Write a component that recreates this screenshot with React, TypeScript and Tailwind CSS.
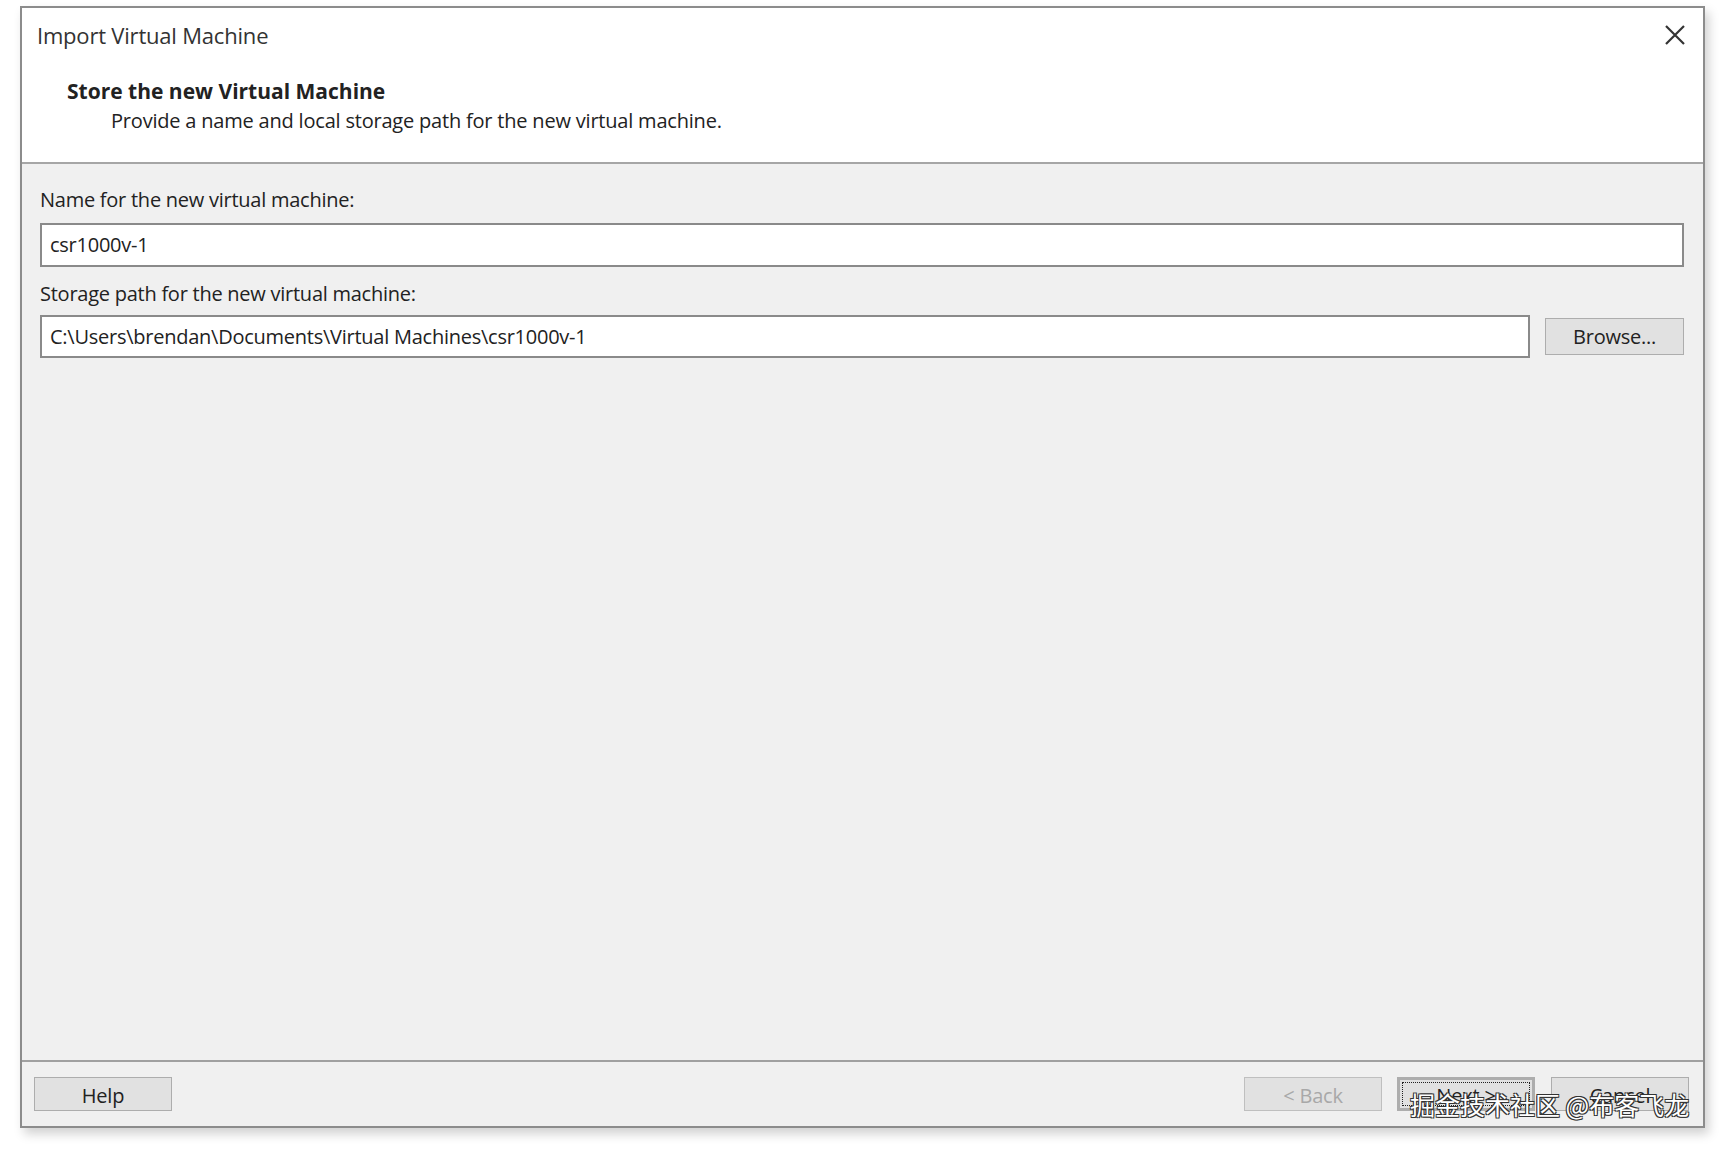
import React from "react";

const font = { fontFamily: '"Open Sans", "Noto Sans", "Noto Sans CJK SC", sans-serif' };

function Btn({ children, className = "" }: { children: React.ReactNode; className?: string }) {
  return (
    <div
      className={
        "w-[138px] h-[34px] flex items-center justify-center pt-[4px] border border-[#adadad] bg-[#e1e1e1] text-[20px] tracking-[-0.2px] text-[#222] " +
        className
      }
    >
      {children}
    </div>
  );
}

export default function App() {
  return (
    <div className="w-[1725px] h-[1149px] bg-white relative overflow-hidden" style={font}>
      <div className="absolute left-0 top-0 w-full h-full pt-[6px] pl-[20px]">
        <div className="w-[1685px] h-[1122px] border-2 border-[#8c8c8c] flex flex-col bg-[#f0f0f0] shadow-[4px_6px_10px_rgba(0,0,0,0.18)]">
          {/* Header */}
          <div className="h-[156px] bg-white border-b-2 border-[#a6a6a6] relative pt-[12px]">
            <div className="pl-[15px] text-[22px] leading-[30px] tracking-[-0.2px] text-[#333]">Import Virtual Machine</div>
            <div className="pl-[45px] mt-[26px] text-[21px] leading-[30px] font-bold text-[#222]">
              Store the new Virtual Machine
            </div>
            <div className="pl-[89px] text-[20px] leading-[30px] tracking-[-0.2px] text-[#222]">
              Provide a name and local storage path for the new virtual machine.
            </div>
            <svg
              className="absolute right-[17px] top-[16px]"
              width="22"
              height="22"
              viewBox="0 0 22 22"
            >
              <path d="M2 2 L20 20 M20 2 L2 20" stroke="#333" strokeWidth="2.2" fill="none" />
            </svg>
          </div>
          {/* Body */}
          <div className="flex-1 pt-[22px] pl-[18px] pr-[19px] tracking-[-0.25px]">
            <div className="text-[20px] leading-[28px] text-[#222]">Name for the new virtual machine:</div>
            <div className="mt-[9px] h-[44px] border-2 border-[#8a8a8a] bg-white flex items-center pl-[8px] text-[20px] text-[#222]">
              csr1000v-1
            </div>
            <div className="mt-[13px] text-[20px] leading-[28px] text-[#222]">Storage path for the new virtual machine:</div>
            <div className="mt-[7px] flex items-center gap-[15px]">
              <div className="flex-1 h-[43px] border-2 border-[#8a8a8a] bg-white flex items-center pl-[8px] text-[20px] text-[#222]">
                C:\Users\brendan\Documents\Virtual Machines\csr1000v-1
              </div>
              <div className="w-[139px] h-[37px] flex items-center justify-center border border-[#adadad] bg-[#e1e1e1] text-[20px] text-[#222]">
                Browse...
              </div>
            </div>
          </div>
          {/* Footer */}
          <div className="h-[66px] border-t-2 border-[#a0a0a0] flex items-start pt-[15px] pl-[12px] pr-[14px]">
            <Btn>Help</Btn>
            <div className="flex-1" />
            <Btn className="text-[#a8a8a8] bg-[#cccccc] border-[#bfbfbf]">&lt; Back</Btn>
            <Btn className="ml-[15px] border-[3px] border-[#4a5060] relative">
              <span className="absolute inset-[2px] border border-dotted border-[#222]" />
              Next &gt;
            </Btn>
            <Btn className="ml-[16px]">Cancel</Btn>
          </div>
        </div>
      </div>
      {/* Watermark */}
      <div
        className="absolute left-[1410px] top-[1086px] text-[25px] leading-[36px] text-white whitespace-nowrap [text-shadow:0_0_1px_#333,1px_1px_0_#333,-1px_-1px_0_#333,1px_-1px_0_#333,-1px_1px_0_#333]"
        style={{ fontFamily: '"Noto Sans CJK SC", sans-serif' }}
      >
        掘金技术社区 @布客飞龙
      </div>
    </div>
  );
}
